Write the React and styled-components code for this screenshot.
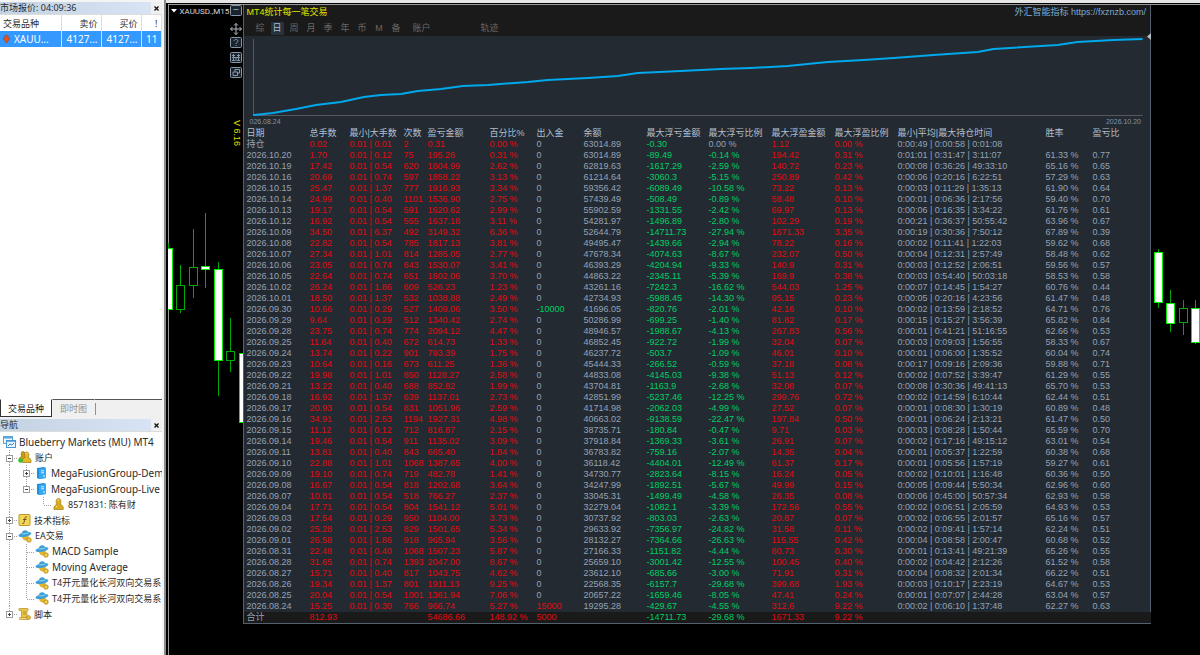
import React, { useState } from 'react';
import styled, { createGlobalStyle } from 'styled-components';

const GlobalStyle = createGlobalStyle`
  * {
    box-sizing: border-box;
  }
  body {
    margin: 0;
    background-color: #000000;
    font-family: "Noto Sans", "Noto Sans CJK SC", sans-serif;
  }
  button {
    margin: 0;
    padding: 0;
    border: none;
    background: none;
    font: inherit;
    cursor: pointer;
  }
`

const Page = styled.div`
  display: flex;
  min-height: 100vh;
  overflow: hidden;
`

/* ---------- left side ---------- */

const Sidebar = styled.aside`
  display: flex;
  flex-direction: column;
  flex: 0 0 165px;
  padding: 2px 2px 0 0;
  background-color: #f4f4f4;
  border-right: 2px solid #8c8c8c;
  color: #2b2b2b;
  font-size: 9px;
`
const Dock = styled.section`
  display: flex;
  flex-direction: column;
  flex: ${props => (props.$grow ? '1 1 auto' : '0 0 236px')};
  min-width: 0;
  background-color: #ffffff;
`
const DockTitle = styled.header`
  display: flex;
  justify-content: space-between;
  flex: none;
  height: 13px;
  border-bottom: 1px solid #dcdcdc;
  background-color: #f0f0f0;
  line-height: 12px;
`
const DockName = styled.h2`
  flex: 1;
  margin: 0;
  background: linear-gradient(90deg, #c3d2e2, #d8e4f3);
  font-size: 9px;
  font-weight: normal;
  white-space: nowrap;
`
const CloseButton = styled.button`
  width: 11px;
  height: 12px;
  color: #111111;
  svg {
    display: block;
    margin: auto;
  }
`
const QuoteTable = styled.table`
  width: 100%;
  table-layout: fixed;
  border-collapse: collapse;
  white-space: nowrap;
  th, td {
    height: 16px;
    padding: 0 3px;
    border-right: 1px solid #dcdcdc;
    font-weight: normal;
    line-height: 15px;
    text-align: right;
    overflow: hidden;
  }
  th:first-child, td:first-child {
    text-align: left;
  }
  td {
    background-color: #3399ff;
    color: #ffffff;
    font-size: 10px;
  }
`
const SymbolCell = styled.div`
  display: flex;
  align-items: center;
  gap: 4px;
`
const TabBar = styled.div`
  display: flex;
  height: 20px;
  margin-top: auto;
  border-bottom: 2px solid #f0f0f0;
  background-color: #f0f0f0;
`
const DockTab = styled.button`
  height: 18px;
  padding: 0 7px;
  border: 1px solid ${props => (props.$active ? '#333333' : 'transparent')};
  border-top-color: ${props => (props.$active ? '#ffffff' : '#555555')};
  background-color: ${props => (props.$active ? '#ffffff' : '#f0f0f0')};
  color: ${props => (props.$active ? '#1c1c1c' : '#909090')};
`
const TabSpace = styled.div`
  display: flex;
  align-items: center;
  flex: 1;
  height: 18px;
  border-top: 1px solid #555555;
  &::before {
    content: "";
    width: 1px;
    height: 12px;
    background-color: #909090;
  }
`
const Tree = styled.ul`
  display: grid;
  grid-auto-rows: 1fr;
  height: 188px;
  margin: 2px 0 0;
  padding: 0;
  list-style: none;
`
const TreeItem = styled.li`
  display: flex;
  align-items: center;
  padding-left: ${props => (props.$root ? 3 : 1)}px;
  min-height: 0;
  overflow: hidden;
  white-space: nowrap;
  svg {
    flex: none;
  }
`
const TreeLabel = styled.span`
  margin-left: 3px;
  font-size: ${props => (props.$cjk ? 9 : 10)}px;
`

/* ---------- chart window ---------- */

const ChartWindow = styled.main`
  position: relative;
  display: flex;
  flex: 1;
  min-width: 0;
  align-items: flex-start;
  border-top: 3px solid #e6e6e6;
  background-color: #000000;
`
const ChartFrame = styled.div`
  display: flex;
  flex: 1;
  align-items: flex-start;
  min-width: 0;
  min-height: calc(100vh - 4px);
  margin: 1px 0 0 2px;
  border-top: 1px solid #9a9a9a;
  border-left: 1px solid #9a9a9a;
`
const CandleLayer = styled.svg`
  position: absolute;
  top: 200px;
  ${props => (props.$side === 'left' ? 'left: 2px;' : 'right: 0;')}
`
const LeftGutter = styled.div`
  position: relative;
  display: flex;
  justify-content: space-between;
  flex: 0 0 74px;
`
const RightGutter = styled.div`
  flex: 0 0 49px;
`
const SymbolName = styled.div`
  display: flex;
  align-items: center;
  gap: 3px;
  height: 12px;
  padding-left: 2px;
  color: #d8d8d8;
  font-family: Roboto, sans-serif;
  font-size: 8px;
  white-space: nowrap;
  svg {
    flex: none;
  }
`
const Tools = styled.div`
  display: flex;
  flex-direction: column;
  width: 13px;
`
const ToolButton = styled.button`
  width: 12px;
  height: ${props => (props.$tall ? 14 : 11)}px;
  margin-bottom: ${props => props.$gap || 4}px;
  svg {
    display: block;
  }
`
const Version = styled.div`
  margin-top: 38px;
  color: #e0e000;
  font-family: "Liberation Sans", sans-serif;
  font-size: 9px;
  line-height: 12px;
  writing-mode: vertical-rl;
  white-space: nowrap;
`

/* ---------- statistics panel ---------- */

const Panel = styled.section`
  position: relative;
  flex: 1;
  min-width: 0;
  border: 1px solid #526070;
  border-top: none;
  background-color: #232a32;
  color: #95a3b5;
  font-family: "Liberation Sans", "Noto Sans CJK SC", sans-serif;
  font-size: 9px;
`
const PanelHead = styled.header`
  height: 31px;
  background-color: #1a1a1a;
`
const TitleRow = styled.div`
  display: flex;
  justify-content: space-between;
  height: 17px;
  padding: 0 4px 0 3px;
  line-height: 15px;
`
const PanelTitle = styled.h1`
  margin: 0;
  color: #e2e200;
  font-size: 9px;
  font-weight: normal;
`
const SiteLink = styled.a`
  color: #7cabd4;
  text-decoration: none;
`
const PeriodBar = styled.nav`
  display: flex;
  gap: 4px;
  padding-left: 10px;
`
const PeriodButton = styled.button`
  min-width: 13px;
  height: 13px;
  margin-left: ${props => props.$space || 0}px;
  background-color: ${props => (props.$active ? '#26323e' : 'transparent')};
  color: ${props => (props.$active ? '#a9bccf' : '#686868')};
  line-height: 13px;
`
const Pointer = styled.svg`
  position: absolute;
  top: 28px;
  right: -1px;
`
const Curve = styled.svg`
  display: block;
  width: 100%;
  height: 81px;
`
const CurveDates = styled.div`
  display: flex;
  justify-content: space-between;
  height: 11px;
  padding: 0 9px 0 6px;
  color: #8593a4;
  font-size: 7px;
  line-height: 9px;
`
const StatTable = styled.table`
  width: 100%;
  table-layout: fixed;
  border-collapse: collapse;
  white-space: nowrap;
  tr {
    height: 11px;
  }
  th, td {
    height: 11px;
    padding: 0;
    font-weight: normal;
    line-height: 11px;
    text-align: left;
  }
  th:first-child, td:first-child {
    padding-left: 3px;
  }
  thead th {
    color: #b2bfd0;
  }
  tfoot {
    background-color: #1a1a1a;
  }
`
const tones = { red: '#e00a0e', green: '#00cf64', plain: '#95a3b5' }
const Value = styled.td`
  color: ${props => tones[props.$tone]};
`

const columns = [
  ['日期', 66], ['总手数', 40], ['最小|大手数', 54], ['次数', 24], ['盈亏金额', 62],
  ['百分比%', 47], ['出入金', 47], ['余额', 63], ['最大浮亏金额', 62], ['最大浮亏比例', 63],
  ['最大浮盈金额', 63], ['最大浮盈比例', 63], ['最小|平均|最大持仓时间', 148], ['胜率', 47], ['盈亏比', 58],
]

// date, lots, max lot, count, profit, %, in/out, balance, dd, dd %, float, float %, min, avg, max time, win %, ratio
const history = `
持仓 0.02 0.01 2 0.31 0.00 0 63014.89 -0.30 0.00 1.12 0.00 0:00:49 0:00:58 0:01:08
2026.10.20 1.70 0.12 75 195.26 0.31 0 63014.89 -89.49 -0.14 194.42 0.31 0:01:01 0:31:47 3:11:07 61.33 0.77
2026.10.19 17.42 0.54 620 1604.99 2.62 0 62819.63 -1617.29 -2.59 140.72 0.23 0:00:08 0:36:26 49:33:10 65.16 0.65
2026.10.16 20.69 0.74 597 1858.22 3.13 0 61214.64 -3060.3 -5.15 250.89 0.42 0:00:06 0:20:16 6:22:51 57.29 0.63
2026.10.15 25.47 1.37 777 1916.93 3.34 0 59356.42 -6089.49 -10.58 73.22 0.13 0:00:03 0:11:29 1:35:13 61.90 0.64
2026.10.14 24.99 0.40 1101 1536.90 2.75 0 57439.49 -508.49 -0.89 58.48 0.10 0:00:01 0:06:36 2:17:56 59.40 0.70
2026.10.13 19.17 0.54 591 1620.62 2.99 0 55902.59 -1331.55 -2.42 69.97 0.13 0:00:06 0:16:35 3:34:22 61.76 0.61
2026.10.12 16.92 0.54 555 1637.18 3.11 0 54281.97 -1496.89 -2.80 102.29 0.19 0:00:21 0:36:37 50:55:42 63.96 0.67
2026.10.09 34.50 6.37 492 3149.32 6.36 0 52644.79 -14711.73 -27.94 1671.33 3.35 0:00:19 0:30:36 7:50:12 67.89 0.39
2026.10.08 22.82 0.54 785 1817.13 3.81 0 49495.47 -1439.66 -2.94 78.22 0.16 0:00:02 0:11:41 1:22:03 59.62 0.68
2026.10.07 27.34 1.01 814 1285.05 2.77 0 47678.34 -4074.63 -8.67 232.07 0.50 0:00:04 0:12:31 2:57:49 58.48 0.62
2026.10.06 23.05 0.74 643 1530.07 3.41 0 46393.29 -4204.94 -9.33 140.9 0.31 0:00:03 0:12:52 2:06:51 59.56 0.57
2026.10.05 22.64 0.74 651 1602.06 3.70 0 44863.22 -2345.11 -5.39 169.9 0.38 0:00:03 0:54:40 50:03:18 58.53 0.58
2026.10.02 26.24 1.86 609 526.23 1.23 0 43261.16 -7242.3 -16.62 544.03 1.25 0:00:07 0:14:45 1:54:27 60.76 0.44
2026.10.01 18.50 1.37 532 1038.88 2.49 0 42734.93 -5988.45 -14.30 95.15 0.23 0:00:05 0:20:16 4:23:56 61.47 0.48
2026.09.30 10.66 0.29 527 1409.06 3.50 -10000 41696.05 -820.76 -2.01 42.16 0.10 0:00:02 0:13:59 2:18:52 64.71 0.76
2026.09.29 9.64 0.29 512 1340.42 2.74 0 50286.99 -699.25 -1.40 81.82 0.17 0:00:15 0:15:27 3:56:39 65.82 0.84
2026.09.28 23.75 0.74 774 2094.12 4.47 0 48946.57 -1988.67 -4.13 267.83 0.56 0:00:01 0:41:21 51:16:55 62.66 0.53
2026.09.25 11.64 0.40 672 614.73 1.33 0 46852.45 -922.72 -1.99 32.04 0.07 0:00:03 0:09:03 1:56:55 58.33 0.67
2026.09.24 13.74 0.22 901 793.39 1.75 0 46237.72 -503.7 -1.09 46.01 0.10 0:00:01 0:06:00 1:35:52 60.04 0.74
2026.09.23 10.64 0.16 673 611.25 1.36 0 45444.33 -266.52 -0.59 37.18 0.08 0:00:17 0:09:16 2:09:36 59.88 0.71
2026.09.22 19.98 1.01 850 1128.27 2.58 0 44833.08 -4145.03 -9.38 51.13 0.12 0:00:02 0:07:52 3:39:47 61.29 0.55
2026.09.21 13.22 0.40 688 852.82 1.99 0 43704.81 -1163.9 -2.68 32.08 0.07 0:00:08 0:30:36 49:41:13 65.70 0.53
2026.09.18 16.92 1.37 639 1137.01 2.73 0 42851.99 -5237.46 -12.25 299.76 0.72 0:00:02 0:14:59 6:10:44 62.44 0.51
2026.09.17 20.93 0.54 831 1051.96 2.59 0 41714.98 -2062.03 -4.99 27.52 0.07 0:00:01 0:08:30 1:30:19 60.89 0.48
2026.09.16 34.91 2.53 1194 1927.31 4.98 0 40663.02 -9138.59 -22.47 197.84 0.50 0:00:01 0:06:24 2:13:21 61.47 0.50
2026.09.15 11.12 0.12 712 816.87 2.15 0 38735.71 -180.84 -0.47 9.71 0.03 0:00:03 0:08:28 1:50:44 65.59 0.70
2026.09.14 19.46 0.54 911 1135.02 3.09 0 37918.84 -1369.33 -3.61 26.91 0.07 0:00:02 0:17:16 49:15:12 63.01 0.54
2026.09.11 13.81 0.40 843 665.40 1.84 0 36783.82 -759.16 -2.07 14.35 0.04 0:00:01 0:05:37 1:22:59 60.38 0.68
2026.09.10 22.88 1.01 1068 1387.65 4.00 0 36118.42 -4404.01 -12.49 61.37 0.17 0:00:01 0:05:56 1:57:19 59.27 0.61
2026.09.09 19.10 0.74 719 482.78 1.41 0 34730.77 -2823.64 -8.15 16.24 0.05 0:00:02 0:10:01 1:16:48 60.36 0.50
2026.09.08 16.67 0.54 818 1202.68 3.64 0 34247.99 -1892.51 -5.67 49.99 0.15 0:00:05 0:09:44 5:50:34 62.96 0.60
2026.09.07 10.81 0.54 518 766.27 2.37 0 33045.31 -1499.49 -4.58 26.35 0.08 0:00:06 0:45:00 50:57:34 62.93 0.58
2026.09.04 17.71 0.54 804 1541.12 5.01 0 32279.04 -1082.1 -3.39 172.56 0.55 0:00:02 0:06:51 2:05:59 64.93 0.53
2026.09.03 17.54 0.29 950 1104.00 3.73 0 30737.92 -803.03 -2.63 20.87 0.07 0:00:02 0:06:55 2:01:57 65.16 0.57
2026.09.02 25.28 2.53 829 1501.65 5.34 0 29633.92 -7356.97 -24.82 31.58 0.11 0:00:02 0:09:41 1:57:14 62.24 0.51
2026.09.01 26.58 1.86 918 965.94 3.56 0 28132.27 -7364.66 -26.63 115.55 0.42 0:00:04 0:08:58 2:00:47 60.68 0.52
2026.08.31 22.48 0.40 1068 1507.23 5.87 0 27166.33 -1151.82 -4.44 80.73 0.30 0:00:01 0:13:41 49:21:39 65.26 0.55
2026.08.28 31.65 0.74 1393 2047.00 8.67 0 25659.10 -3001.42 -12.55 100.45 0.40 0:00:02 0:04:42 2:12:26 61.52 0.58
2026.08.27 15.71 0.40 817 1043.75 4.62 0 23612.10 -685.66 -3.00 71.91 0.31 0:00:04 0:08:32 2:01:34 66.22 0.51
2026.08.26 19.34 1.37 801 1911.13 9.25 0 22568.35 -6157.7 -29.68 399.68 1.93 0:00:03 0:10:17 2:23:19 64.67 0.53
2026.08.25 20.04 0.54 1001 1361.94 7.06 0 20657.22 -1659.46 -8.05 47.41 0.24 0:00:01 0:07:07 2:44:28 63.04 0.57
2026.08.24 15.25 0.30 766 966.74 5.27 15000 19295.28 -429.67 -4.55 312.6 9.22 0:00:02 0:06:10 1:37:48 62.27 0.63
`.trim().split('\n').map(line => line.split(' '))

const signTone = (v) => {
  if (Number(v) === 0) return 'plain';
  return Number(v) < 0 ? 'green' : 'red';
}

const StatRow = ({ row }) => {
  const [date, lots, maxLot, count, profit, pct, flow, balance, dd, ddPct, fp, fpPct, tMin, tAvg, tMax, win, ratio] = row
  return (
    <tr>
      <Value $tone="plain">{date}</Value>
      <Value $tone="red">{lots}</Value>
      <Value $tone="red">{`0.01 | ${maxLot}`}</Value>
      <Value $tone="red">{count}</Value>
      <Value $tone="red">{profit}</Value>
      <Value $tone="red">{pct} %</Value>
      <Value $tone={signTone(flow)}>{flow}</Value>
      <Value $tone="plain">{balance}</Value>
      <Value $tone="green">{dd}</Value>
      <Value $tone={signTone(ddPct)}>{ddPct} %</Value>
      <Value $tone="red">{fp}</Value>
      <Value $tone="red">{fpPct} %</Value>
      <Value $tone="plain">{`${tMin} | ${tAvg} | ${tMax}`}</Value>
      <Value $tone="plain">{win ? `${win} %` : ''}</Value>
      <Value $tone="plain">{ratio}</Value>
    </tr>
  )
}

const periods = [
  ['综'], ['日'], ['周'], ['月'], ['季'], ['年'], ['币'], ['M'], ['备'], ['账户', 6], ['轨迹', 46],
]

const curve = '9,79 29,77 52,73 72,69 97,66 120,61 137,59 157,58 174,55 197,53 219,50 244,49 284,46 304,44 344,42 374,40 394,37 437,35 477,33 507,32 544,30 584,26 620,24 650,22 690,19 734,16 750,13 814,9 834,6 870,4 899,3'

/* ---------- candles ---------- */

// x, body top, body bottom, wick top, wick bottom, filled
const leftCandles = [
  [-4, 48, 109, 43, 109, true],
  [8, 85, 109, 65, 113, false],
  [21, 67, 85, 29, 98, false],
  [33, 66, 69, 13, 88, true],
  [46, 69, 160, 62, 196, true],
  [58, 151, 160, 118, 172, false],
  [71, 153, 222, 148, 222, true],
]
const rightCandles = [
  [5, 52, 102, 49, 108, true],
  [17, 103, 123, 90, 132, true],
  [30, 108, 122, 100, 135, false],
  [42, 108, 142, 100, 144, true],
]

const Candles = ({ side, width, items }) => (
  <CandleLayer $side={side} width={width} height="230" viewBox={`0 3 ${width} 230`}>
    {items.map(([x, top, bottom, high, low, filled]) => (
      <g key={x}>
        <path d={`M${x + 4.5} ${high}V${low}`} stroke="#00a800" />
        <rect x={x + 0.5} y={top + 0.5} width="8" height={bottom - top} fill={filled ? '#ffffff' : '#000000'} stroke={filled ? '#00f000' : '#00a800'} />
      </g>
    ))}
  </CandleLayer>
)

/* ---------- icons ---------- */

const CloseIcon = () => (
  <svg width="5" height="5" viewBox="0 0 5 5"><path d="M.5 .5l4 4M4.5 .5l-4 4" stroke="currentColor" strokeWidth="1.3" /></svg>
)

const ServerIcon = () => (
  <svg width="13" height="14" viewBox="0 0 13 14">
    <path d="M2 2l7-1 2 1v10l-7 1-2-1z" fill="#1c8fe0" />
    <path d="M4 3l7-1v10l-7 1z" fill="#31a9f5" />
    <path d="M6 5l3-.4M6 7l3-.4" stroke="#d8f1ff" />
    <circle cx="9" cy="10" r=".8" fill="#ffffff" />
  </svg>
)

const PersonIcon = () => (
  <svg width="13" height="14" viewBox="0 0 13 14">
    <path d="M2 12.500c-.6-3 1-4.500 2.800-5C3.500 5 4 1.500 6.500 1.500S9.600 5 8.300 7.500c2 .5 3.500 2 2.900 5z" fill="#d9ac1f" stroke="#a67d10" strokeWidth=".7" />
    <path d="M5.500 3.500c.5-1 1.500-.8 1.700-.2M4 10l1-1" stroke="#fff0a0" fill="none" />
  </svg>
)

const AccountsIcon = () => (
  <svg width="14" height="14" viewBox="0 0 14 14">
    <path d="M1 11C.7 8 2 7 3.500 6.500 2.700 4 3 1.500 5 1.500s2.300 2.500 1.800 4.500L8 11z" fill="#c99a18" stroke="#987210" strokeWidth=".6" />
    <path d="M4.500 12.500c-.4-3 .6-4.500 2.500-5C6 5 6.500 2 8.700 2s2.700 3 1.600 5.500c2 .5 3 2 2.700 5z" fill="#e3b829" stroke="#9e7810" strokeWidth=".7" />
    <path d="M8 4c.5-.9 1.300-.7 1.500-.1" stroke="#fff0a0" fill="none" />
    <circle cx="2.600" cy="10.500" r="2.300" fill="#2fc32f" />
  </svg>
)

const TerminalIcon = () => (
  <svg width="13" height="14" viewBox="0 0 13 14">
    <rect x=".5" y="1.500" width="9" height="7" fill="#e9f5ff" stroke="#5ba4dc" />
    <path d="M.5 2.500h9" stroke="#5ba4dc" strokeWidth="2" />
    <rect x="3.500" y="5.500" width="9" height="7" fill="#e9f5ff" stroke="#4a94cf" />
    <path d="M3.500 6h9" stroke="#4a94cf" strokeWidth="1.500" />
    <path d="M5 11l2-2 2 1 2-2" fill="none" stroke="#3986c4" />
  </svg>
)

const IndicatorIcon = () => (
  <svg width="13" height="14" viewBox="0 0 13 14">
    <rect x="1" y="1.500" width="11" height="11" rx="1" fill="#f4d657" stroke="#bd9727" />
    <path d="M9 4C7.500 3.300 7 4.500 6.700 6L6 9.500c-.3 1.200-1 1.200-1.800.8M5 6.500h3.500" fill="none" stroke="#6f5510" />
  </svg>
)

const ExpertIcon = () => (
  <svg width="14" height="14" viewBox="0 0 14 14">
    <path d="M4 6c0 4 1.500 5.500 4 5.500s3-2 2.500-5z" fill="#e2b52b" />
    <path d="M.5 6.800C.5 5 3 4.500 3.700 4.300 4.200 2 5.500 1.200 7.200 1.200S10 2.200 10.300 3.300c1.500-.1 3 .1 3 1C13.300 6 9 8.200 4.500 8.200 2 8.200.5 7.700.5 6.800z" fill="#3f9fd5" />
    <path d="M4.300 4.700c1.500.4 4 .2 5.700-.9" fill="none" stroke="#9cdcf6" />
    <circle cx="11" cy="11" r="2.300" fill="#e6b82c" stroke="#a98119" strokeWidth=".6" />
    <circle cx="11" cy="11" r=".7" fill="#fff3b8" />
  </svg>
)

const ScriptIcon = () => (
  <svg width="13" height="14" viewBox="0 0 13 14">
    <path d="M1.500 1.500h8c1 0 1 2 0 2H9v7H3.500v-7h-2c-1 0-1-2 0-2z" fill="#ecc64a" stroke="#b18c22" strokeWidth=".7" />
    <path d="M5 5h3M5 7h3" stroke="#a5801b" strokeWidth=".8" />
    <path d="M2 10.500h8v2H2c-1 0-1-2 0-2z" fill="#f5dc7b" stroke="#b18c22" strokeWidth=".7" />
    <circle cx="10.500" cy="10.500" r="2" fill="#e6b82c" stroke="#a98119" strokeWidth=".6" />
  </svg>
)

const Guide = ({ kind }) => (
  <svg width="17" height="16" viewBox="0 0 17 16" shapeRendering="crispEdges">
    <g stroke="#a0a0a0" strokeDasharray="1 1">
      {kind !== 'none' && <path d={`M8.500 0V${['elbow', 'plusEnd', 'minusEnd'].includes(kind) ? 8 : 16}`} />}
      {kind !== 'none' && kind !== 'line' && <path d="M9 8.500h8" />}
    </g>
    {(kind.startsWith('plus') || kind.startsWith('minus')) && (
      <g>
        <rect x="5.500" y="5.500" width="6" height="6" fill="#ffffff" stroke="#9c9c9c" />
        <path d={kind.startsWith('plus') ? 'M7 8.500h3M8.500 7v3' : 'M7 8.500h3'} stroke="#444444" />
      </g>
    )}
  </svg>
)

const nodes = [
  ['Blueberry Markets (MU) MT4', TerminalIcon, []],
  ['账户', AccountsIcon, ['minus']],
  ['MegaFusionGroup-Dem', ServerIcon, ['line', 'plus']],
  ['MegaFusionGroup-Live', ServerIcon, ['line', 'minusEnd']],
  ['8571831: 陈有财', PersonIcon, ['line', 'none', 'elbow']],
  ['技术指标', IndicatorIcon, ['plus']],
  ['EA交易', ExpertIcon, ['minus']],
  ['MACD Sample', ExpertIcon, ['line', 'tee']],
  ['Moving Average', ExpertIcon, ['line', 'tee']],
  ['T4开元量化长河双向交易系', ExpertIcon, ['line', 'tee']],
  ['T4开元量化长河双向交易系', ExpertIcon, ['line', 'elbow']],
  ['脚本', ScriptIcon, ['plusEnd']],
]

const ToolFrame = ({ children }) => (
  <svg width="12" height="11" viewBox="0 0 12 11" fill="none" stroke="#8596a8">
    <rect x=".5" y=".5" width="11" height="10" rx="1" fill="#1b232c" />
    {children}
  </svg>
)

const App = () => {
  const [period, setPeriod] = useState('日')

  return (
    <Page>
      <GlobalStyle />
      <Sidebar>
        <Dock $grow>
          <DockTitle>
            <DockName>市场报价: 04:09:36</DockName>
            <CloseButton aria-label="关闭市场报价"><CloseIcon /></CloseButton>
          </DockTitle>
          <QuoteTable>
            <colgroup>
              <col width="61" /><col width="40" /><col width="40" /><col width="20" />
            </colgroup>
            <thead>
              <tr><th>交易品种</th><th>卖价</th><th>买价</th><th>!</th></tr>
            </thead>
            <tbody>
              <tr>
                <td>
                  <SymbolCell>
                    <svg width="7" height="8" viewBox="0 0 7 8"><path d="M2 0h3v3h2L3.500 8 0 3h2z" fill="#e8541c" stroke="#a63a10" strokeWidth=".6" /></svg>
                    XAUU...
                  </SymbolCell>
                </td>
                <td>4127...</td>
                <td>4127...</td>
                <td>11</td>
              </tr>
            </tbody>
          </QuoteTable>
          <TabBar>
            <DockTab $active>交易品种</DockTab>
            <DockTab>即时图</DockTab>
            <TabSpace />
          </TabBar>
        </Dock>
        <Dock>
          <DockTitle>
            <DockName>导航</DockName>
            <CloseButton aria-label="关闭导航"><CloseIcon /></CloseButton>
          </DockTitle>
          <Tree>
            {nodes.map(([label, Icon, guides], i) => (
              <TreeItem key={i} $root={guides.length === 0}>
                {guides.map((kind, g) => <Guide key={g} kind={kind} />)}
                <Icon />
                <TreeLabel $cjk={/[\u4e00-\u9fff]/.test(label)}>{label}</TreeLabel>
              </TreeItem>
            ))}
          </Tree>
        </Dock>
      </Sidebar>

      <ChartWindow>
        <Candles side="left" width={76} items={leftCandles} />
        <Candles side="right" width={51} items={rightCandles} />
        <ChartFrame>
          <LeftGutter>
            <SymbolName>
              <svg width="6" height="4" viewBox="0 0 6 4"><path d="M0 0h6L3 3.500z" fill="#ffffff" /></svg>
              XAUUSD.,M15
            </SymbolName>
            <Tools>
              <ToolButton aria-label="最小化" $gap={6}>
                <ToolFrame><path d="M3.500 4.500h5" /></ToolFrame>
              </ToolButton>
              <ToolButton aria-label="移动" $tall $gap={1}>
                <svg width="12" height="14" viewBox="0 0 12 14" fill="none" stroke="#b4bcc4">
                  <path d="M6 1.500v11M.5 7h11M4 3.500l2-2 2 2M4 10.500l2 2 2-2M2.500 5l-2 2 2 2M9.500 5l2 2-2 2" />
                </svg>
              </ToolButton>
              <ToolButton aria-label="帮助">
                <ToolFrame><path d="M4 4c0-2 4-2 4 0C8 5.500 6 5 6 7M6 8v1" /></ToolFrame>
              </ToolButton>
              <ToolButton aria-label="保存">
                <ToolFrame><path d="M2 3.500h3M2 5.500h8M7 3.500h3M3.500 2v7M8.500 2v7M6 5v4M2 8.500h3M7 8.500h3" /></ToolFrame>
              </ToolButton>
              <ToolButton aria-label="窗口">
                <ToolFrame><path d="M3 5h4.500v3.500H3zM5 5V2.500h4.500V6H7.500" /></ToolFrame>
              </ToolButton>
              <Version>V 6.16</Version>
            </Tools>
          </LeftGutter>

          <Panel>
            <PanelHead>
              <TitleRow>
                <PanelTitle>MT4统计每一笔交易</PanelTitle>
                <SiteLink href="https://fxznzb.com/">外汇智能指标 https://fxznzb.com/</SiteLink>
              </TitleRow>
              <PeriodBar>
                {periods.map(([name, space]) => (
                  <PeriodButton key={name} $space={space} $active={name === period} onClick={() => setPeriod(name)}>
                    {name}
                  </PeriodButton>
                ))}
              </PeriodBar>
            </PanelHead>
            <Pointer width="4" height="7" viewBox="0 0 4 7"><path d="M4 0v7L0 3.500z" fill="#b8bcc0" /></Pointer>
            <Curve viewBox="0 0 907 81" preserveAspectRatio="none" fill="none">
              <path d="M9.500 3v76.500H899" stroke="#56585f" vectorEffect="non-scaling-stroke" />
              <polyline points={curve} stroke="#00a8ec" strokeWidth="2" vectorEffect="non-scaling-stroke" />
            </Curve>
            <CurveDates>
              <span>026.08.24</span>
              <span>2026.10.20</span>
            </CurveDates>
            <StatTable>
              <colgroup>
                {columns.map(([name, width]) => <col key={name} width={width} />)}
              </colgroup>
              <thead>
                <tr>{columns.map(([name]) => <th key={name}>{name}</th>)}</tr>
              </thead>
              <tbody>
                {history.map(row => <StatRow key={row[0]} row={row} />)}
              </tbody>
              <tfoot>
                <tr>
                  <Value $tone="plain">合计</Value>
                  <Value $tone="red">812.93</Value>
                  <td colSpan="2" />
                  <Value $tone="red">54686.66</Value>
                  <Value $tone="red">148.92 %</Value>
                  <Value $tone="red">5000</Value>
                  <td />
                  <Value $tone="green">-14711.73</Value>
                  <Value $tone="green">-29.68 %</Value>
                  <Value $tone="red">1671.33</Value>
                  <Value $tone="red">9.22 %</Value>
                  <td colSpan="3" />
                </tr>
              </tfoot>
            </StatTable>
          </Panel>
          <RightGutter />
        </ChartFrame>
      </ChartWindow>
    </Page>
  )
}

export default App;
